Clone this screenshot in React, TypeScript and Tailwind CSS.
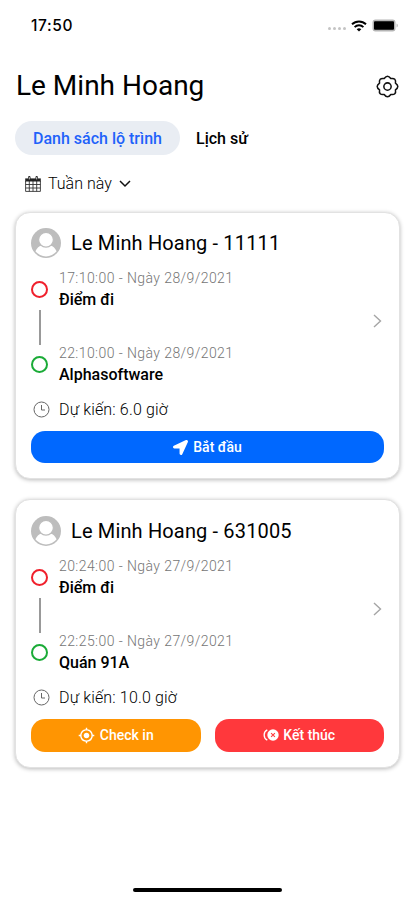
import { clsx } from 'clsx';
import { FaLocationArrow } from 'react-icons/fa';
import { MdMyLocation } from 'react-icons/md';

type Stop = { time: string; place: string };

type Trip = {
  title: string;
  from: Stop;
  to: Stop;
  duration: string;
  started: boolean;
};

const trips: Trip[] = [
  {
    title: 'Le Minh Hoang - 11111',
    from: { time: '17:10:00 - Ngày 28/9/2021', place: 'Điểm đi' },
    to: { time: '22:10:00 - Ngày 28/9/2021', place: 'Alphasoftware' },
    duration: 'Dự kiến: 6.0 giờ',
    started: false,
  },
  {
    title: 'Le Minh Hoang - 631005',
    from: { time: '20:24:00 - Ngày 27/9/2021', place: 'Điểm đi' },
    to: { time: '22:25:00 - Ngày 27/9/2021', place: 'Quán 91A' },
    duration: 'Dự kiến: 10.0 giờ',
    started: true,
  },
];

function StatusBar() {
  return (
    <div className="flex h-[51px] items-center justify-between pr-[16px] pl-[31px]">
      <span className="font-[Inter,sans-serif] text-[15.5px] font-medium tracking-[0.6px]">
        17:50
      </span>
      <div className="flex items-center">
        <div className="mt-[6px] mr-[5px] flex gap-[2px]">
          <i className="size-[3px] rounded-full bg-[#c4c4c4]" />
          <i className="size-[3px] rounded-full bg-[#c4c4c4]" />
          <i className="size-[3px] rounded-full bg-[#c4c4c4]" />
          <i className="size-[3px] rounded-full bg-[#c4c4c4]" />
        </div>
        <svg width="16" height="12" viewBox="0 0 16 12" fill="none" stroke="#000" strokeWidth="1.9">
          <path d="M1 4.3a10 10 0 0 1 14 0" />
          <path d="M3.6 7.1a6.3 6.3 0 0 1 8.8 0" />
          <path d="M8 11.6 5.7 9.3a3.3 3.3 0 0 1 4.6 0z" fill="#000" stroke="none" />
        </svg>
        <svg className="ml-[5px]" width="27" height="13" viewBox="0 0 27 13">
          <rect x="0.5" y="0.5" width="23" height="12" rx="3" fill="#b5b5b5" />
          <rect x="2" y="2.25" width="20" height="8.5" rx="1" />
          <path d="M24.6 4.5v4c1.5-.6 1.5-3.4 0-4z" fill="#b0b0b0" />
        </svg>
      </div>
    </div>
  );
}

function GearIcon() {
  return (
    <svg width="23" height="23" viewBox="0 0 24 24" fill="none" stroke="#111" strokeWidth="1.6" strokeLinejoin="round">
      <path d="M8.56 3.69Q12-1.2 15.44 3.69 21.33 2.67 20.31 8.56 25.2 12 20.31 15.44 21.33 21.33 15.44 20.31 12 25.2 8.56 20.31 2.67 21.33 3.69 15.44-1.2 12 3.69 8.56 2.67 2.67 8.56 3.69z" />
      <circle cx="12" cy="12" r="3.8" />
    </svg>
  );
}

function CalendarIcon() {
  return (
    <svg width="16" height="16" viewBox="0 0 16 16" fill="none" stroke="#333">
      <path d="M.6 5v10.4h14.8V5M.6 8.5h14.8M.6 12h14.8M4.3 5v10.4M8 5v10.4M11.7 5v10.4" strokeWidth=".9" />
      <path d="M.2 2.4h15.6v3.1H.2z" fill="#222" stroke="none" />
      <path d="M4.3 1.2v2.6M11.7 1.2v2.6" stroke="#222" strokeWidth="2.4" strokeLinecap="round" />
      <path d="M4.3 1.2v2.2M11.7 1.2v2.2" stroke="#fff" strokeWidth=".8" />
    </svg>
  );
}

function AvatarIcon() {
  return (
    <svg className="shrink-0" width="30" height="30" viewBox="0 0 30 30">
      <circle cx="15" cy="15" r="15" fill="#bdbdbd" />
      <path d="M4.4 23.2c1.4-3.2 3.4-5 6-5.8h9.2c2.6.8 4.6 2.6 6 5.8a13.3 13.3 0 0 1-21.2 0z" fill="#fff" />
      <circle cx="15" cy="11.8" r="7.4" fill="#fff" stroke="#bdbdbd" strokeWidth="1.2" />
    </svg>
  );
}

function ClockIcon() {
  return (
    <svg className="ml-[2px]" width="17" height="17" viewBox="0 0 17 17" fill="none" stroke="#666">
      <circle cx="8.5" cy="8.5" r="7.5" />
      <path d="M8.5 4v5H12" />
    </svg>
  );
}

function EndIcon() {
  return (
    <svg width="16" height="12" viewBox="0 0 16 12" fill="none">
      <path d="M4.3.9a5.7 5.7 0 0 0 0 10.2" stroke="#fff" strokeWidth="1.3" />
      <circle cx="10" cy="6" r="5.7" fill="#fff" />
      <path d="m8.1 4.1 3.8 3.8M11.9 4.1 8.1 7.9" stroke="#ff3b3f" strokeWidth="1.1" />
    </svg>
  );
}

function StopText({ stop }: { stop: Stop }) {
  return (
    <div className="h-[43px]">
      <div className="text-[14px] leading-[21px] font-light tracking-[0.42px] text-[#757575]">{stop.time}</div>
      <div className="text-[16px] leading-[22px] font-medium">{stop.place}</div>
    </div>
  );
}

function TripCard({ trip }: { trip: Trip }) {
  return (
    <article
      className={clsx(
        'rounded-[15px] border border-[#e2e2e2] bg-white px-[15px] pb-[15px] shadow-[0_1px_4px_rgba(0,0,0,0.28)]',
        trip.started ? 'pt-[16px]' : 'pt-[14.5px]',
      )}
    >
      <header className="flex items-center gap-[10px]">
        <AvatarIcon />
        <h2 className="text-[20px] leading-[30px] tracking-[0.15px]">{trip.title}</h2>
      </header>
      <div className="mt-[10px] flex items-center">
        <div className="flex w-[28px] flex-col items-start self-start pt-[13px]">
          <span className="size-[17px] rounded-full border-2 border-[#f0202c]" />
          <span className="mt-[12px] mb-[11px] ml-[8px] h-[35px] w-[1.5px] bg-[#999]" />
          <span className="size-[17px] rounded-full border-2 border-[#1aab37]" />
        </div>
        <div className="flex flex-1 flex-col gap-[32px]">
          <StopText stop={trip.from} />
          <StopText stop={trip.to} />
        </div>
        <svg className="mr-[2px] mb-[11px]" width="9" height="14" viewBox="0 0 9 14" fill="none" stroke="#a5a5a5" strokeWidth="1.4">
          <path d="m1 1 6.5 6L1 13" />
        </svg>
      </div>
      <div className="mt-[13px] flex h-[22px] items-center gap-[9px] text-[16px] font-light tracking-[0.15px] text-black">
        <ClockIcon />
        {trip.duration}
      </div>
      {trip.started ? (
        <div className="mt-[10px] grid h-[33.5px] grid-cols-2 gap-[14px] text-[14px] font-medium text-white">
          <button className="flex items-center justify-center gap-[5px] rounded-[14px] bg-[#ff9502]">
            <MdMyLocation size={17} />
            Check in
          </button>
          <button className="flex items-center justify-center gap-[4px] rounded-[14px] bg-[#ff383c]">
            <EndIcon />
            Kết thúc
          </button>
        </div>
      ) : (
        <button className="mt-[10px] flex h-[32px] w-full items-center justify-center gap-[5px] rounded-[14px] bg-[#0068ff] pt-px text-[14px] font-medium text-white">
          <FaLocationArrow size={15} />
          Bắt đầu
        </button>
      )}
    </article>
  );
}

export default function App() {
  return (
    <div className="flex h-[900px] w-[415px] flex-col overflow-hidden bg-white font-[Roboto,sans-serif] text-black">
      <StatusBar />
      <div className="flex h-[70px] items-center justify-between pr-[16px] pl-[16px]">
        <h1 className="text-[28px]">Le Minh Hoang</h1>
        <GearIcon />
      </div>
      <nav className="flex h-[34px] items-center px-[15px] text-[16px] font-medium">
        <span className="flex h-full w-[165px] items-center justify-center rounded-full bg-[#e9edf3] pt-px text-[#1f62fa]">
          Danh sách lộ trình
        </span>
        <span className="ml-[16px] pt-px">Lịch sử</span>
      </nav>
      <div className="flex h-[57px] items-center gap-[7px] pl-[25px] text-[16px] font-light text-black">
        <CalendarIcon />
        Tuần này
        <svg width="12" height="8" viewBox="0 0 12 8" fill="none" stroke="#111" strokeWidth="1.5">
          <path d="m1 1 5 5 5-5" />
        </svg>
      </div>
      <main className="flex flex-col gap-[20px] px-[15px]">
        {trips.map((trip) => (
          <TripCard key={trip.title} trip={trip} />
        ))}
      </main>
      <div className="mx-auto mt-auto mb-[8px] h-[4px] w-[149px] rounded-full bg-black" />
    </div>
  );
}
